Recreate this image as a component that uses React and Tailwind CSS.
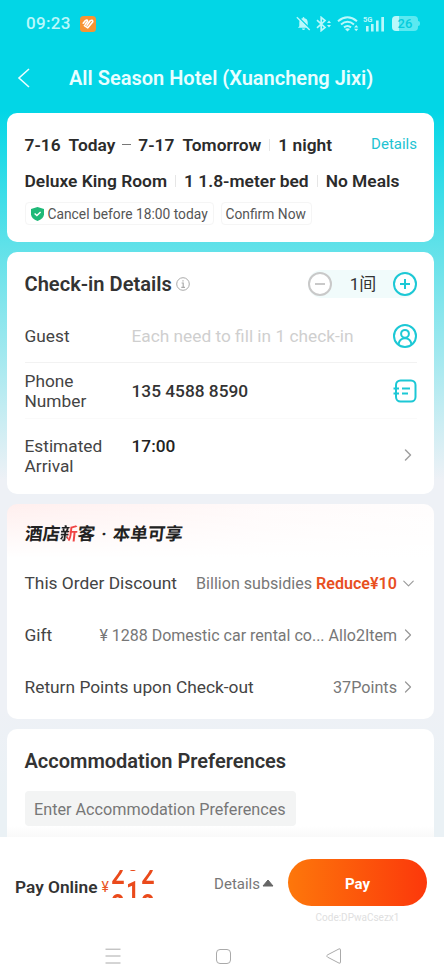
import { ChevronDown, ChevronRight } from 'lucide-react';

const digitColumns = [
  { prev: '2', next: '2', prevTop: 'top-[-11.5px]', nextTop: 'top-[13px]' },
  { prev: '0', next: '1', prevTop: 'top-[-21px]', nextTop: 'top-[2.5px]' },
  { prev: '2', next: '2', prevTop: 'top-[-11.5px]', nextTop: 'top-[13px]' },
];

function StatusBar() {
  return (
    <div className="flex h-[47px] items-center pl-[26px] pr-[24px] text-[#b9f8fb]">
      <span className="text-[17px] font-medium tracking-[0.3px]">09:23</span>
      <svg className="ml-[9px]" width="16" height="16" viewBox="0 0 16 16" fill="none">
        <rect width="16" height="16" rx="3.5" fill="#f79433" />
        <path d="M3.2 7.2L5.4 4.6Q7.2 3.2 7.6 5.2L5.2 8.2M7 9.2L10.4 4.6Q12.6 3.4 12.8 5.8L7.8 11.8L4.4 9.6" stroke="#fff" strokeWidth="1.6" strokeLinecap="round" strokeLinejoin="round" />
      </svg>
      <div className="ml-auto flex items-center">
        {/* muted bell */}
        <svg width="15" height="15" viewBox="0 0 16 16" fill="none">
          <path d="M2 12.4L3.5 10.8V7Q3.5 3 7 2.4Q7.2 1 8 1Q8.8 1 9 2.4Q12.5 3 12.5 7V10.8L14 12.4Z" fill="currentColor" />
          <path d="M6.3 13.4H9.7Q9.3 15 8 15Q6.7 15 6.3 13.4Z" fill="currentColor" />
          <path d="M2.2 0.9L15 13.6" stroke="#02d6e6" strokeWidth="1.6" />
          <path d="M0.9 1.4L14.6 15" stroke="currentColor" strokeWidth="1.5" />
        </svg>
        <svg className="ml-[5px]" width="16" height="16" viewBox="0 0 16 16" fill="none">
          <path d="M1 4.2L9 11.4L5.2 14.6V1.4L9 4.6L1 11.8" stroke="currentColor" strokeWidth="1.7" />
          <path d="M11 7L13 4.6L15 7ZM11 9L13 11.4L15 9Z" fill="currentColor" />
        </svg>
        <svg className="ml-[5px]" width="22" height="16" viewBox="0 0 22 16" fill="none">
          <path d="M1 5.2Q10.5 -2.6 20 5.2M4 8.4Q10.5 3 17 8.4M7 11.4Q10.5 8.6 14 11.4" stroke="currentColor" strokeWidth="2" />
          <path d="M8 13Q10.5 11.4 13 13L10.5 15.6Z" fill="currentColor" />
          <path d="M17.1 11.4L19.2 9L21.3 11.4ZM17.1 12.8L19.2 15.2L21.3 12.8Z" fill="currentColor" />
        </svg>
        <div className="relative ml-[4px] h-[16px] w-[22px]">
          <span className="absolute left-0 top-0 text-[7.5px] font-bold leading-[8px]">5G</span>
          <svg className="absolute left-0 top-0" width="22" height="16" viewBox="0 0 22 16">
            <path d="M3 10H5.6V15.5H3ZM8 8H10.6V15.5H8ZM13 4.5H15.6V15.5H13ZM18.3 1H21V15.5H18.3Z" fill="currentColor" />
          </svg>
        </div>
        <div className="ml-[7px] flex items-center">
          <div className="flex h-[15px] w-[26px] items-center justify-center rounded-[4px] bg-[linear-gradient(90deg,#b9f8fb_26%,#5be9f1_26%)] text-[13px] font-medium leading-none text-[#04cddd]">
            26
          </div>
          <div className="h-[5px] w-[2px] rounded-r-full bg-[#5be9f1]" />
        </div>
      </div>
    </div>
  );
}

function StayCard() {
  return (
    <section className="h-[129px] rounded-[10px] bg-white pl-[17.5px] pr-[17px] pt-[20px] text-[#2b2b2b]">
      <div className="flex h-[22px] items-center whitespace-nowrap pt-px text-[17.35px] font-semibold">
        <span>7-16</span>
        <span className="ml-[8px]">Today</span>
        <span className="mx-[7px] h-px w-[9px] bg-[#777]" />
        <span>7-17</span>
        <span className="ml-[8px]">Tomorrow</span>
        <span className="mx-[8px] h-[12px] w-px bg-[#e6e6e6]" />
        <span>1 night</span>
        <span className="ml-auto text-[15px] font-normal text-[#22c3d2]">Details</span>
      </div>
      <div className="mt-[15px] flex h-[22px] items-center whitespace-nowrap text-[17.4px] font-semibold">
        <span>Deluxe King Room</span>
        <span className="mx-[8px] h-[12px] w-px bg-[#e6e6e6]" />
        <span>1 1.8-meter bed</span>
        <span className="mx-[8px] h-[12px] w-px bg-[#e6e6e6]" />
        <span>No Meals</span>
      </div>
      <div className="mt-[10px] flex gap-[7px] text-[13.8px] text-[#555]">
        <div className="flex h-[23px] w-[189px] items-center whitespace-nowrap rounded-[4px] border border-[#f5f5f5] pl-[5px] pt-px">
          <svg className="mr-[4px]" width="13" height="14" viewBox="0 0 13 14" fill="none">
            <path d="M6.5 0L13 2V7.5Q12.6 11.5 6.5 14Q0.4 11.5 0 7.5V2Z" fill="#1fb978" />
            <path d="M3.6 6.4L5.9 8.6L9.6 4.9" stroke="#fff" strokeWidth="1.4" />
          </svg>
          Cancel before 18:00 today
        </div>
        <div className="flex h-[23px] w-[91px] items-center whitespace-nowrap rounded-[4px] border border-[#f5f5f5] pl-[4px] pt-px">
          Confirm Now
        </div>
      </div>
    </section>
  );
}

function CheckInCard() {
  return (
    <section className="mt-[10px] h-[242px] rounded-[10px] bg-white pl-[17.5px] pr-[17px] pt-[18px] text-[17.3px] text-[#444]">
      <div className="flex h-[28px] items-center">
        <h2 className="text-[20.1px] font-semibold text-[#333]">Check-in Details</h2>
        <svg className="ml-[4px]" width="14" height="14" viewBox="0 0 14 14" fill="none" stroke="#aaa">
          <circle cx="7" cy="7" r="6.3" />
          <path d="M5.6 6H7.2V10.2M5.3 10.3H9M7 3.2V4.5" strokeWidth="1.2" />
        </svg>
        <div className="ml-auto flex h-[28px] w-[109px] items-center justify-between rounded-full bg-[#f1fbfb]">
          <svg width="24" height="24" viewBox="0 0 24 24" fill="#fff" stroke="#c9c9c9" strokeWidth="2">
            <circle cx="12" cy="12" r="11" />
            <path d="M7 12H17" />
          </svg>
          <span className="pl-px pt-px text-[17px] text-[#333]">1间</span>
          <svg width="24" height="24" viewBox="0 0 24 24" fill="#fff" stroke="#1cc8d5" strokeWidth="2">
            <circle cx="12" cy="12" r="11" />
            <path d="M7 12H17M12 7V17" />
          </svg>
        </div>
      </div>

      <div className="mt-[12px] flex h-[53px] items-center border-b border-[#f2f2f2]">
        <span className="w-[107px] pt-px">Guest</span>
        <span className="pt-px text-[#cfcfcf]">Each need to fill in 1 check-in</span>
        <svg className="ml-auto" width="24" height="24" viewBox="0 0 24 24" fill="none" stroke="#1cc8d5" strokeWidth="2">
          <circle cx="12" cy="12" r="11" />
          <circle cx="12" cy="9.8" r="3.9" />
          <path d="M5.6 20Q6.6 14.2 12 14.2Q17.4 14.2 18.4 20" />
        </svg>
      </div>

      <div className="flex h-[56px] items-center border-b border-[#fafafa]">
        <span className="w-[107px] pr-[20px] pt-px leading-[20px]">Phone Number</span>
        <span className="pt-[2px] font-medium text-[#333]">135 4588 8590</span>
        <svg className="ml-auto" width="24" height="24" viewBox="0 0 24 24" fill="none" stroke="#1cc8d5" strokeWidth="2">
          <rect x="3" y="1.5" width="19.5" height="21" rx="4.5" />
          <path d="M0.5 9.5H6M0.5 14.5H6M9 9.5H17M9 14.5H15" />
        </svg>
      </div>

      <div className="flex h-[73px] items-center">
        <span className="w-[107px] leading-[20px]">Estimated Arrival</span>
        <span className="mb-[18px] font-medium text-[#222]">17:00</span>
        <ChevronRight className="mb-px ml-auto mr-[-1px] text-[#a0a0a0]" size={20} strokeWidth={1.8} />
      </div>
    </section>
  );
}

function OfferCard() {
  return (
    <section className="mt-[10px] h-[215px] rounded-[10px] bg-white bg-[linear-gradient(180deg,transparent_0,#fff_54px),linear-gradient(90deg,#ffefee,#fffafa_60%,#fffdfd)] pl-[17.5px] pr-[16px] pt-[18px] text-[17.35px] text-[#444]">
      <h2 className="flex h-[24px] items-center whitespace-pre text-[17.5px] font-bold text-[#222]">
        <span className="-skew-x-6">
          酒店<span className="bg-[linear-gradient(100deg,#222_45%,#f04444_45%)] bg-clip-text text-transparent">新</span>客<span className="px-[2px]"> · </span>本单可享
        </span>
      </h2>
      <div className="mt-[12px] flex h-[52px] items-center whitespace-nowrap">
        <span className="mb-px">This Order Discount</span>
        <span className="ml-auto text-[16.1px] text-[#777]">
          Billion subsidies <span className="font-semibold text-[#e8501f]">Reduce¥10</span>
        </span>
        <ChevronDown className="mb-[2px] ml-[2px]" size={19} strokeWidth={1.4} color="#999" />
      </div>
      <div className="flex h-[52px] items-center whitespace-nowrap">
        <span className="mb-px">Gift</span>
        <span className="ml-auto text-[16px] text-[#777]">¥ 1288 Domestic car rental co... Allo2Item</span>
        <ChevronRight className="mb-[2px] ml-px" size={20} strokeWidth={1.5} color="#999" />
      </div>
      <div className="flex h-[52px] items-center whitespace-nowrap">
        <span className="mb-px">Return Points upon Check-out</span>
        <span className="ml-auto text-[16.2px] text-[#777]">37Points</span>
        <ChevronRight className="mb-[2px] ml-px" size={20} strokeWidth={1.5} color="#999" />
      </div>
    </section>
  );
}

function PreferencesCard() {
  return (
    <section className="mt-[10px] h-[108px] rounded-t-[10px] bg-[linear-gradient(180deg,#fff_90%,#f9f9f9)] px-[17.5px] pt-[20px]">
      <h2 className="h-[24px] text-[20px] font-semibold leading-[24px] text-[#333]">Accommodation Preferences</h2>
      <div className="mt-[18px] flex h-[35px] w-[271px] items-center whitespace-nowrap rounded-[4px] bg-[#f3f4f4] pl-[9.5px] pt-[3px] text-[16.2px] text-[#777]">
        Enter Accommodation Preferences
      </div>
    </section>
  );
}

function PayBar() {
  return (
    <footer className="h-[143px] bg-white">
      <div className="flex pl-[15px] pr-[17px] pt-[22px]">
        <span className="mt-[17px] h-[22px] whitespace-nowrap text-[17.3px] font-semibold leading-[22px] text-[#333]">Pay Online</span>
        <span className="ml-[4px] mt-[18px] text-[14px] leading-[20px] text-[#ea5426]">¥</span>
        {/* price ticker, caught between two values */}
        <div className="ml-[2px] mt-[11px] h-[28px] overflow-hidden">
          <div className="flex h-[28px] origin-top scale-y-130 text-[24px] font-semibold leading-[28px] text-[#ea4a1b]">
            {digitColumns.map((col, i) => (
              <div key={i} className="relative h-[28px] w-[15px]">
                <span className={`absolute left-0 ${col.prevTop}`}>{col.prev}</span>
                <span className={`absolute left-0 ${col.nextTop}`}>{col.next}</span>
              </div>
            ))}
          </div>
        </div>
        <div className="ml-auto mr-[14px] mt-[15px] flex h-[20px] items-center text-[15px] text-[#777]">
          Details
          <svg className="mb-[2px] ml-[2px]" width="12" height="9" viewBox="0 0 12 9">
            <path d="M6 1L11 7H1Z" fill="#666" stroke="#666" strokeLinejoin="round" />
          </svg>
        </div>
        <div>
          <button className="block h-[47px] w-[139px] rounded-full bg-[linear-gradient(90deg,#fd770b,#fc380b)] pt-[3px] text-[15px] font-bold text-white">
            Pay
          </button>
          <p className="mt-[6px] text-center text-[10px] leading-[12px] text-[#e0e0e0]">Code:DPwaCsezx1</p>
        </div>
      </div>
      <div className="mt-[24px] flex items-center pl-[105px]">
        <svg width="16" height="16" viewBox="0 0 16 16" stroke="#aaa">
          <path d="M0.5 1.2H15.5M0.5 8H15.5M0.5 15H15.5" />
        </svg>
        <div className="ml-[95px] h-[15px] w-[15px] rounded-[4px] border border-[#aaa]" />
        <svg className="ml-[95px]" width="16" height="16" viewBox="0 0 16 16" fill="none" stroke="#aaa">
          <path d="M1 8Q0.6 7.4 1.5 6.9L13 0.9Q14.5 0.4 14.5 1.8V14.2Q14.5 15.6 13 15.1L1.5 9.1Q0.7 8.6 1 8Z" />
        </svg>
      </div>
    </footer>
  );
}

export default function App() {
  return (
    <div className="h-[980px] w-[445px] overflow-hidden bg-white font-[Roboto,'Noto_Sans_CJK_SC',sans-serif]">
      <div className="w-[444px] bg-[linear-gradient(180deg,#02d6e6_0,#02d6e6_110px,#5fe1e9_245px,#eef1f6_480px,#eef1f6_710px,#eaf1f5_800px)]">
        <StatusBar />
        <header className="flex h-[66px] items-center pb-[4px] pl-[17px] text-[#e9feff]">
          <svg width="14" height="20" viewBox="0 0 14 20" fill="none">
            <path d="M12 1L2 10L12 19" stroke="currentColor" strokeWidth="1.6" />
          </svg>
          <h1 className="ml-[38px] whitespace-nowrap text-[20px] font-semibold">All Season Hotel (Xuancheng Jixi)</h1>
        </header>
        <main className="pl-[7px] pr-[10px]">
          <StayCard />
          <CheckInCard />
          <OfferCard />
          <PreferencesCard />
        </main>
        <PayBar />
      </div>
    </div>
  );
}
